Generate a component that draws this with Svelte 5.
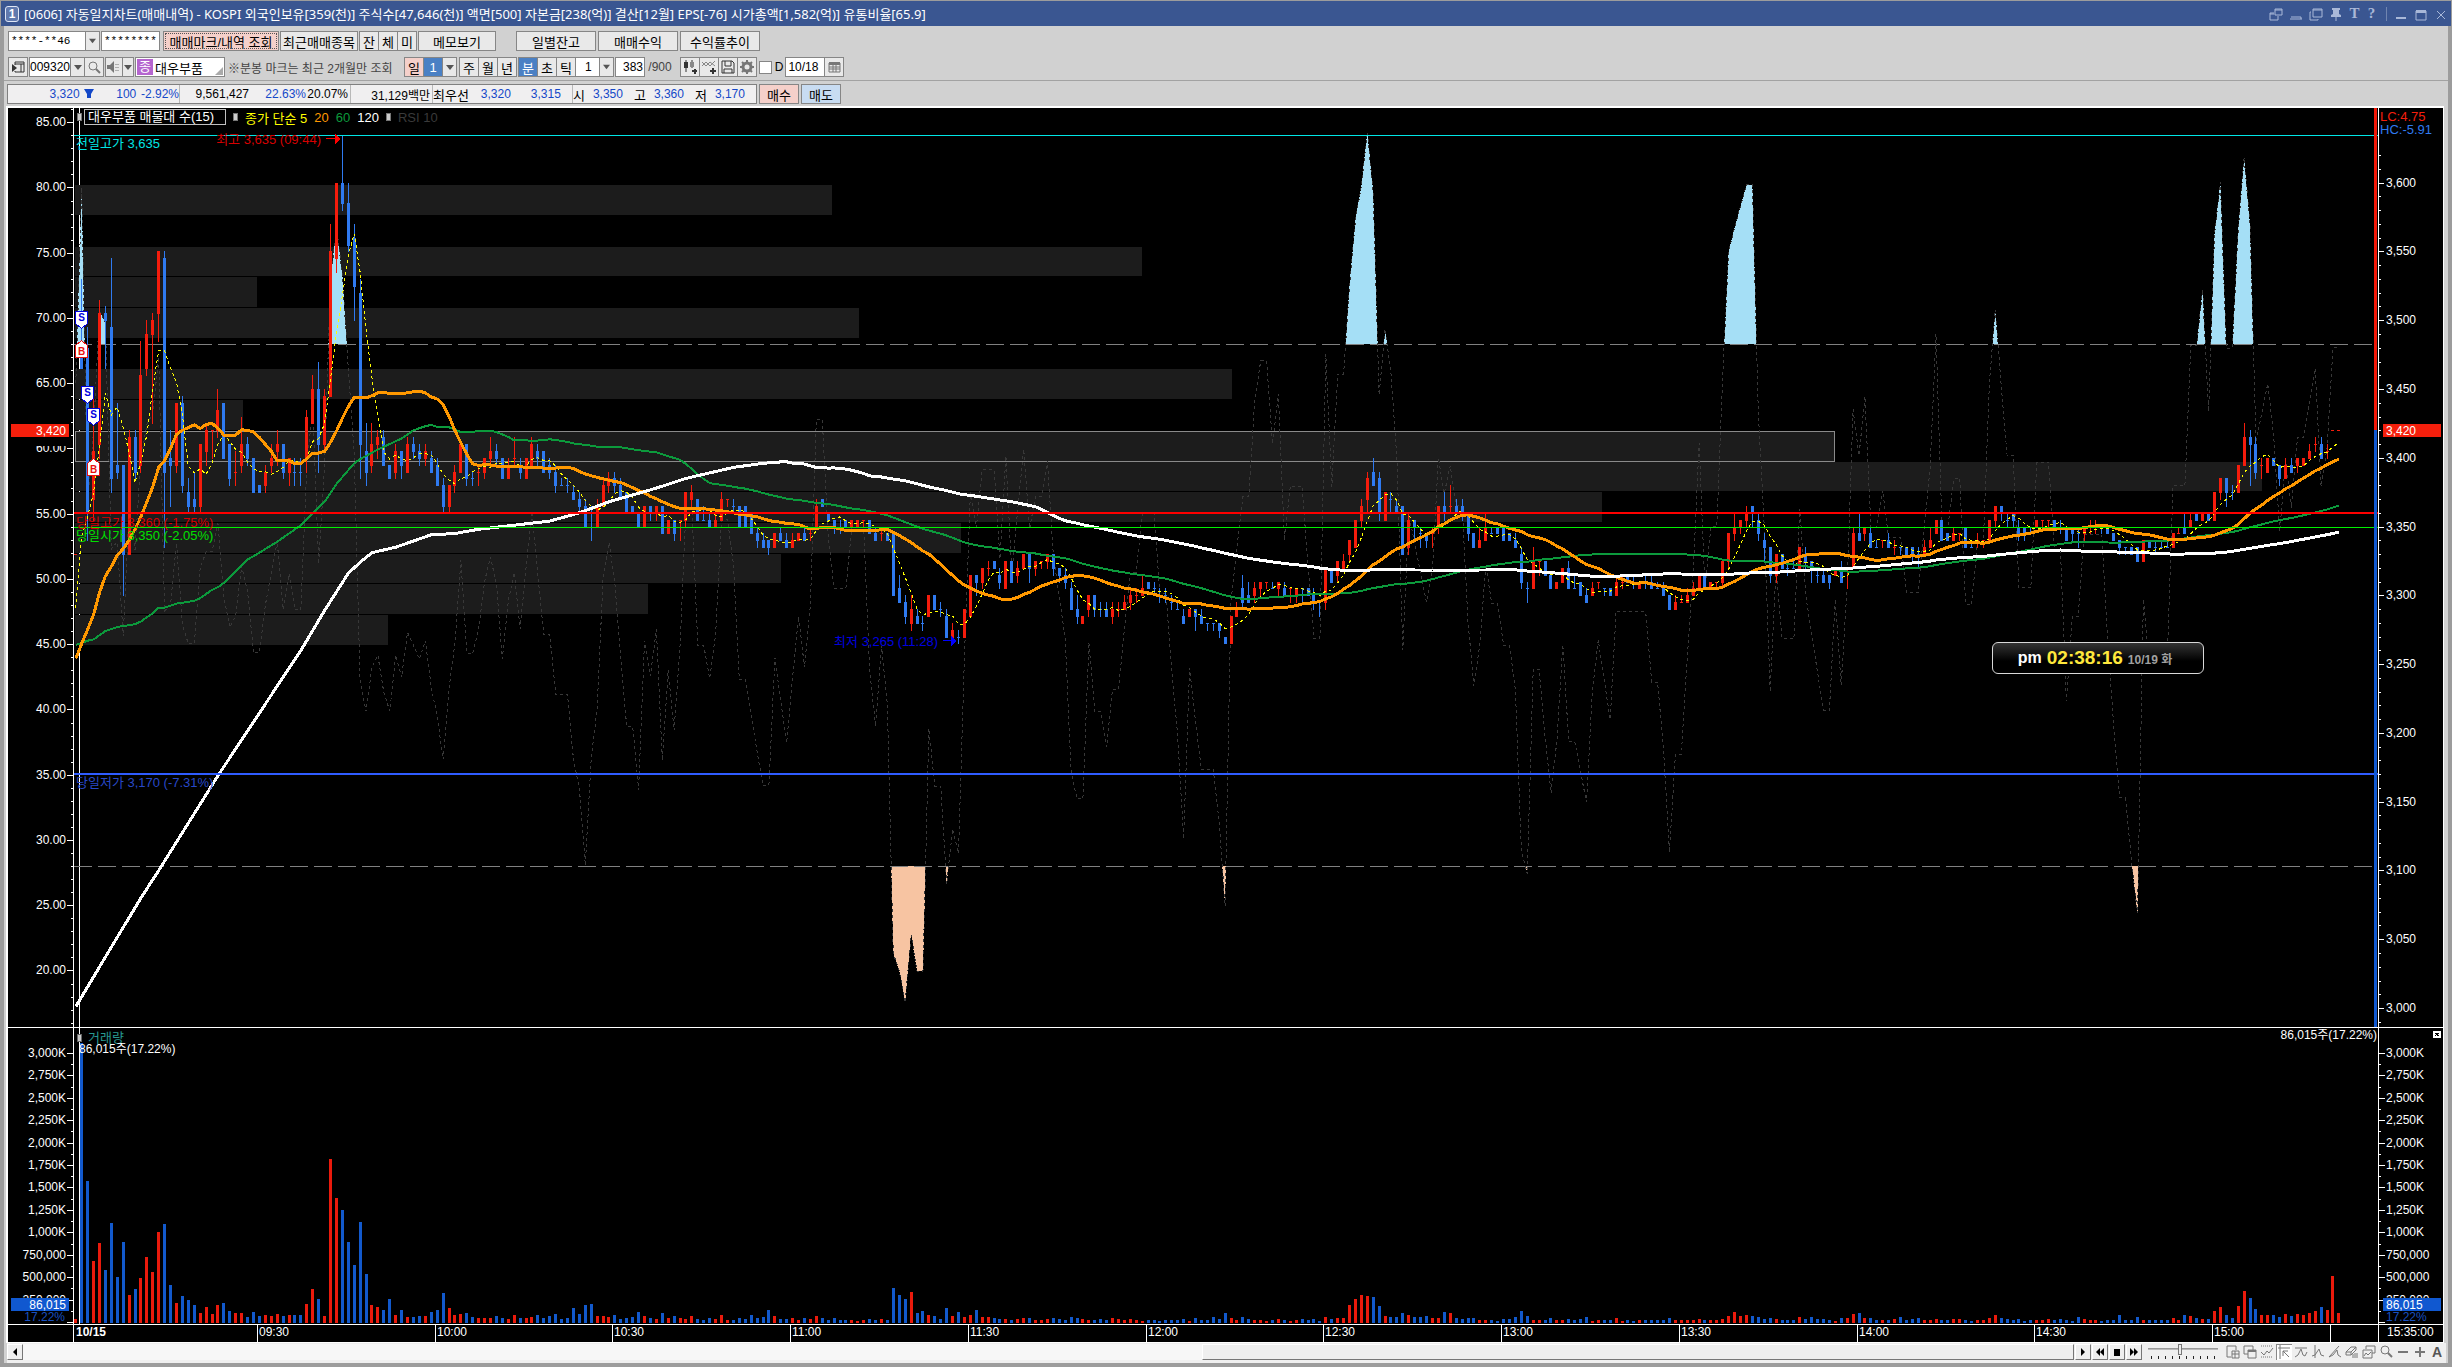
<script lang="ts">
	type Candle = { i: number; up: boolean; top: number; bottom: number; high: number; low: number; close: number; vol: number };
	type Point = [number, number];

	// one token per minute: r|b, body top, body bottom [, high, low], in 5 won ticks above 3,200
	const ticks = `r2626 b57536653 b56325928 r41344931 r61426340 b61606253 b59376935 b39384837 b39263920 r43264426
		b43384437 r52395738 r58536052 r60586145 r70617057 b69387027 b40394433 r48394838 b48364935 b35333732
		b34333832 r42334232 r44414539 r44444440 r47445043 b4840 b42374236 r38384136 r42394638 b42404339
		b4035 b3635 r38363935 r40394238 r42414439 b42384237 r40384036 b38384036 b38384036 r46404738
		r50455245 b50425438 r49425041 r70497449 r80698067 b80778776 b77718070 b72657460 b64426637 b41384536
		r42394538 r43424440 b43394439 b3937 r41384237 b41394137 r42384338 b42414340 b41404239 r41404239
		b40384138 b39364036 b36333732 r36333632 r38363935 r4238 b42374236 b37373836 r38383936 r40384037
		r41404339 b41404239 b4037 r39374037 r40404339 b39384037 r4037 r42394339 b41404239 b4138
		b39384037 b38363935 b36363736 b36363735 b35343634 b34333532 b33303430 b32323328 r33303430 r36333733
		r37363835 b37363835 b36343734 b3532 b3332 b3230 r3330 b33323331 r33323331 b3329
		r3129 b31293128 r31313128 r35313530 r35343633 b3431 b31313331 b31303230 r31303230 r34313531
		r34343433 b33333432 b3330 b3330 b3229 b29283027 b28272927 b28272826 r2927 b29283028
		b28272927 r28272927 r2928 b29283028 r29293028 r33303430 b3433 b3231 b31303129 b30303129
		b3130 r3130 r3130 r31313130 b3129 b29283028 r29293028 b2928 b2920 b21192319
		b19172016 r18162015 b17161816 b16161715 r2017 b2018 b18181917 b17141814 r15141614 b14141513
		r1814 r2317 b23222320 r24222421 r24242523 b2524 b23222421 r2521 b2522 r24232522
		r2624 b26242622 r25242523 r25252524 r26252624 b26242623 b24232422 b23222421 b21182218 b18172016
		r1716 r20182017 b20182017 b18181917 b18171917 r18171916 r18181917 r19182018 r20192118 r20202119
		r21202320 b2221 b21212220 b20202119 b20202119 b19192018 b18181918 b17161816 r1817 b18171815
		b17161816 b16161615 b16161615 b16151614 b1413 r1713 r18171917 b21192318 b20192219 r21202219
		r22212220 r22222221 b21212221 r22212220 b21202220 r21212119 r21202119 b21212119 b2120 b20192118
		b19191917 r24192418 b2422 r25232522 r25242624 r28262825 r3127 r33313430 r37343832 b38364036
		b37323831 r3531 b34343532 b33323432 b3326 r31273226 b31303128 b29293027 b29282927 r29293027
		r33303329 b33323531 r33333632 b33323432 b33323431 b32293228 b2927 r28273027 r30283228 b29293029
		b3029 b3028 b2928 b28272927 b26222721 b21212219 r25212721 r25252523 b2523 b2321
		r2221 r2422 b24212521 b21212321 b2220 b20192119 r21202220 r22222221 b21212120 b2120
		r22202320 r22222321 b2322 b22222321 r2221 b22222321 b22212321 b21212221 b21202220 b2018
		r19182018 r19192019 r20192119 r21202220 r2321 b2321 r2221 r22222221 r25222521 r29252924
		r30293228 r31303129 r32313330 b33323330 b31293228 b28272925 b27232722 r26232622 b2624 b24242523
		b24242524 r2724 b26252724 b25242522 b23232422 b23222422 b23222321 r2423 b24222522 r24242421
		r29243024 b29283228 r30293028 b29273027 b27272827 r28282827 b28272927 r27272826 b27272726 b2726
		b27262725 b26262724 r27262826 r28273027 r3129 b3128 b2928 r29283028 r29292928 b3027
		b27272827 r28282927 r28282827 r3128 r33313330 b33323331 b31313230 b32313230 b30293128 b30293028
		b29293029 r3130 r31313130 r31313130 b3130 b30303129 b3028 b30293028 b29293027 r30293028
		r30303129 r30303129 b30303029 b3029 b2928 b28272826 b27272726 b2726 b2725 r2825
		b2827 b27272826 b27272827 b27272827 r2927 r29293029 b30293229 r31303230 b3231 r3231
		b3231 r3531 r37353734 b37353733 b35353634 r3935 r43394539 b43424436 b42384337 r39394037
		r4038 b4039 b39373936 r39374037 b39384038 r40394038 r4039 r41404240 r42424341 b42404340
		r41414240 r4444 r4444`;

	// traded volume per minute, thousands of shares
	const volumes = `30 3110 1568 676 877 576 1100 498 888 297 364 487 721 554 1000 1089 409 208 286 242 186
		97 164 85 186 208 119 97 97 52 108 63 74 63 85 63 74 74 74 197 364 253 63 1813 1379 1245 888 632 1111 531 186
		164 130 253 74 130 52 52 63 63 108 130 320 152 74 85 97 52 41 41 41 63 41 30 74 41 41 52 74 41 63
		85 30 41 152 85 186 197 63 63 52 74 30 41 52 108 63 41 30 97 41 63 41 30 63 30 20 41 30 74 20
		20 41 30 74 41 52 130 63 30 30 41 20 41 30 63 41 20 41 20 20 20 8 20 30 20 30 20 375 297 253
		330 97 119 74 63 30 152 63 108 52 74 130 52 52 41 30 30 20 30 41 41 20 20 30 41 30 20 52 41 30 20
		20 30 20 41 30 20 30 20 8 20 20 8 20 20 20 30 8 41 20 20 52 30 97 41 20 52 30 20 20 10
		20 30 20 10 20 30 20 30 10 54 30 44 44 186 255 300 290 275 177 64 54 54 98 78 54 54 64 44 44 108
		98 44 30 44 44 20 20 20 10 30 30 54 123 64 20 20 20 44 20 20 30 20 30 54 10 20 20 20 44 10
		20 10 20 20 20 20 20 44 20 20 20 20 30 20 20 20 30 64 108 64 78 64 54 30 44 30 20 20 20 54
		30 54 30 30 20 10 44 44 88 98 44 44 20 20 20 30 52 20 30 41 20 20 30 20 20 30 30 20 10 20 20
		41 74 41 30 20 30 10 20 20 20 30 20 30 20 10 52 30 20 20 10 20 20 74 20 20 52 20 20 20 20 20
		41 20 74 63 41 30 30 119 164 74 41 175 342 264 141 74 74 74 52 85 63 85 74 97 119 164 130 509 97`
		.trim()
		.split(/\s+/)
		.map(Number);

	const candles: Candle[] = ticks
		.trim()
		.split(/\s+/)
		.map((token, n) => {
			const v = (token.slice(1).match(/\d\d/g) ?? []).map((t) => 3200 + Number(t) * 5);
			const up = token[0] === 'r';
			return {
				i: n - 1,
				up,
				top: v[0],
				bottom: v[1],
				high: v[2] ?? v[0],
				low: v[3] ?? v[1],
				close: up ? v[0] : v[1],
				vol: volumes[n] ?? 20
			};
		});

	// the averages start from the previous sessions, so their first points are given
	const head5: Point[] = [[-1, 3291], [0, 3343], [1, 3357], [2, 3375], [3, 3408]];
	const head20: Point[] = [
		[-1, 3254], [0, 3265], [1, 3275], [2, 3286], [3, 3302], [4, 3314], [5, 3321], [6, 3329], [7, 3334], [8, 3340],
		[9, 3348], [10, 3357], [11, 3368], [12, 3379], [13, 3393], [14, 3398], [15, 3407], [16, 3417], [17, 3420], [18, 3422]
	];
	const head60: Point[] = [
		[-1, 3264], [1, 3267], [2, 3268], [4, 3274], [6, 3277], [9, 3279], [10, 3281], [12, 3287], [13, 3291], [14, 3291],
		[16, 3294], [19, 3296], [20, 3298], [22, 3304], [23, 3306], [24, 3309], [28, 3326], [30, 3331], [33, 3339], [37, 3351],
		[39, 3360], [41, 3368], [43, 3381], [46, 3396], [47, 3399], [50, 3406], [52, 3410], [54, 3414], [56, 3420], [58, 3423]
	];
	const head120: Point[] = [
		[-1, 3001], [4, 3037], [10, 3080], [13, 3100], [23, 3169], [31, 3221], [33, 3234], [37, 3260], [41, 3289], [45, 3316],
		[47, 3324], [49, 3331], [53, 3335], [59, 3344], [63, 3345], [67, 3348], [73, 3351], [79, 3354], [84, 3360], [89, 3368],
		[97, 3378], [102, 3385], [110, 3393], [115, 3396], [118, 3397]
	];

	function average(period: number, head: Point[]): Point[] {
		const out = [...head];
		for (let n = period; n < candles.length; n++) {
			let sum = 0;
			for (let k = n - period + 1; k <= n; k++) sum += candles[k].close;
			out.push([candles[n].i, sum / period]);
		}
		return out;
	}

	function strength(period: number): Point[] {
		let gain = 9;
		let loss = 6;
		const out: Point[] = [[-1, 65]];
		for (let n = 1; n < candles.length; n++) {
			const diff = candles[n].close - candles[n - 1].close;
			gain = (gain * (period - 1) + Math.max(diff, 0)) / period;
			loss = (loss * (period - 1) + Math.max(-diff, 0)) / period;
			out.push([candles[n].i, (100 * gain) / (gain + loss)]);
		}
		return out;
	}

	const ma5 = average(5, head5);
	const ma20 = average(20, head20);
	const ma60 = average(60, head60);
	const ma120 = average(120, head120);
	const rsi = strength(10);

	// volume at price, 15 bins from the top, share of the plot width
	const profile = [0.329, 0, 0.464, 0.079, 0.341, 0, 0.503, 0.073, 0.765, 0.951, 0.664, 0.385, 0.307, 0.249, 0.136];

	const marks = [
		{ kind: 'S', i: 0, price: 3494 },
		{ kind: 'S', i: 1, price: 3440 },
		{ kind: 'S', i: 2, price: 3424 },
		{ kind: 'B', i: 0, price: 3485 },
		{ kind: 'B', i: 2, price: 3399 }
	];

	const times = ['09:30', '10:00', '10:30', '11:00', '11:30', '12:00', '12:30', '13:00', '13:30', '14:00', '14:30', '15:00'];

	const L = 66;
	const R = 65;
	const AXIS = 18;

	let W = $state(2436);
	let H = $state(1234);

	let right = $derived(W - R);
	let plotH = $derived(H - AXIS);
	let mainH = $derived(Math.round(plotH * 0.7557));
	let volH = $derived(plotH - mainH);
	let step = $derived((W - L - R) / 388.9);

	const xAt = (i: number) => L + (i + 1.3) * step;
	const col = (i: number) => Math.floor(xAt(i));
	const yPrice = (p: number) => ((3654.3 - p) / 668.1) * mainH;
	const row = (p: number) => Math.round(yPrice(p));
	const yRsi = (r: number) => ((86.09 - r) / 70.42) * mainH;
	const yVol = (v: number) => plotH - 2 - (v / 3000) * volH * 0.906;

	const line = (points: Point[], y: (v: number) => number) =>
		points.map(([i, v]) => `${xAt(i).toFixed(1)},${y(v).toFixed(1)}`).join(' ');

	const area = (level: number) =>
		`${xAt(-1)},${yRsi(level)} ${line(rsi, yRsi)} ${xAt(381)},${yRsi(level)}`;

	const comma = (n: number) => n.toLocaleString('en-US');
	const volLabel = (v: number) => (v >= 1000 ? comma(v) + 'K' : v + ',000');

	const range = (from: number, to: number, by: number) =>
		Array.from({ length: Math.floor((to - from) / by) + 1 }, (_, k) => from + k * by);

	let account = $state('****-**46');
	let password = $state('********');
	let code = $state('009320');
	let count = $state('383');
	let date = $state('10/18');
	let daily = $state(false);
	let zoom = $state(45);
</script>

{#snippet caret()}
	<svg class="caret" viewBox="0 0 8 5" aria-hidden="true"><path d="M0 0h8L4 5z" /></svg>
{/snippet}

<div class="window">
	<header class="title">
		<span class="badge">1</span>
		<h1>[0606] 자동일지차트(매매내역) - KOSPI 외국인보유[359(천)] 주식수[47,646(천)] 액면[500] 자본금[238(억)] 결산[12월] EPS[-76] 시가총액[1,582(억)] 유통비율[65.9]</h1>
		<div class="winbtns">
			<button aria-label="창 분리"><svg viewBox="0 0 14 14"><path d="M6 2h7v6H6zM6 3h7M5 6H1v7h8V9M1 7h4" /></svg></button>
			<button aria-label="내리기"><svg viewBox="0 0 14 14"><path d="M1 12h12M2 10h10v2" /></svg></button>
			<button aria-label="복사"><svg viewBox="0 0 14 14"><path d="M4 2h9v8H4zM4 3h9M2 5H1v8h8v-1" /></svg></button>
			<button aria-label="고정"><svg viewBox="0 0 14 14"><path class="solid" d="M3 1h8v2h-1v4l2 1v2H2V8l2-1V3H3z" /><path d="M7 10v4" /></svg></button>
			<button class="glyph">T</button>
			<button class="glyph">?</button>
			<span class="bar"></span>
			<button aria-label="최소화"><svg viewBox="0 0 14 14"><path class="solid" d="M2 10h10v2H2z" /></svg></button>
			<button aria-label="최대화"><svg viewBox="0 0 14 14"><path d="M2 4h10v9H2z" /><path class="solid" d="M2 3h10v3H2z" /></svg></button>
			<button aria-label="닫기"><svg viewBox="0 0 14 14"><path d="M3 4l8 8M11 4l-8 8" /></svg></button>
		</div>
	</header>

	<div class="body">
		<div class="tools">
			<div class="toolrow">
				<label class="combo account">
					<select bind:value={account} aria-label="계좌번호"><option>****-**46</option></select>
					{@render caret()}
				</label>
				<input class="pass" bind:value={password} aria-label="비밀번호" />
				<button class="pink focus w116">매매마크/내역 조회</button>
				<button class="w78">최근매매종목</button>
				<div class="group">
					<button class="sq">잔</button><button class="sq">체</button><button class="sq">미</button>
				</div>
				<button class="w78">메모보기</button>
				<div class="extra">
					<button class="w80">일별잔고</button>
					<button class="w80">매매수익</button>
					<button class="w80">수익률추이</button>
				</div>
			</div>

			<div class="toolrow second">
				<button class="sq" aria-label="종목창"><svg viewBox="0 0 16 16"><path d="M5 6V3h9v10H5v-1M5 5h9M11 5v8" /><path class="solid" d="M2 5l5 4-5 4z" /></svg></button>
				<div class="group">
					<input class="code" bind:value={code} aria-label="종목코드" />
					<button class="drop" aria-label="종목 목록">{@render caret()}</button>
					<button class="sq" aria-label="검색"><svg class="grey" viewBox="0 0 16 16"><circle cx="7" cy="7" r="4" /><path class="thick" d="M10 10l4 4" /></svg></button>
				</div>
				<div class="group">
					<button class="w18" aria-label="소리"><svg class="grey" viewBox="0 0 16 16"><path class="solid" d="M1 6h3l4-4v12l-4-4H1z" /><path d="M10 5v1M10 8v1M10 11v1M12 5v1M12 8v1M12 11v1" /></svg></button>
					<button class="narrow" aria-label="소리 설정">{@render caret()}</button>
				</div>
				<div class="stock"><b>종</b><span>대우부품</span><i></i></div>
				<p class="note">※분봉 마크는 최근 2개월만 조회</p>
				<div class="group day">
					<button class="sq pink">일</button>
					<button class="sq on">1</button>
					<button class="drop" aria-label="일 주기">{@render caret()}</button>
				</div>
				<div class="group">
					<button class="sq">주</button><button class="sq">월</button><button class="sq">년</button>
				</div>
				<div class="group">
					<button class="sq on">분</button><button class="sq">초</button><button class="sq">틱</button>
					<label class="combo unit">
						<select aria-label="분 주기"><option>1</option></select>
						{@render caret()}
					</label>
				</div>
				<label class="count"><input bind:value={count} /> /900</label>
				<div class="group icons">
					<button class="sq" aria-label="봉 추가"><svg viewBox="0 0 16 16"><path d="M4 1v12M10 1v8" /><path class="solid" d="M2 3h4v6H2z" /><path fill="#888" stroke="none" d="M8 3h4v5H8z" /><path class="thick" d="M13 10v5M10 12h5" /></svg></button>
					<button class="sq" aria-label="지표 추가"><svg viewBox="0 0 16 16"><path stroke="#888" d="M1 7l4-4 4 4 5-5M1 3l4 4 4-4 5 4" /><path class="thick" d="M12 9v6M9 12h6" /></svg></button>
					<button class="sq" aria-label="저장"><svg viewBox="0 0 16 16"><path d="M2 2h10l2 2v10H2zM5 2v5h6V2M4 14v-4h8v4" /></svg></button>
					<button class="sq" aria-label="설정"><svg class="grey" viewBox="0 0 16 16"><circle class="gear" cx="8" cy="8" r="4" /><path class="thick" d="M8 1v3M8 12v3M1 8h3M12 8h3M3 3l2 2M11 11l2 2M13 3l-2 2M5 11l-2 2" /></svg></button>
				</div>
				<label class="check"><input type="checkbox" bind:checked={daily} />D</label>
				<div class="group">
					<input class="date" bind:value={date} aria-label="일자" />
					<button class="sq" aria-label="달력"><svg class="grey" viewBox="0 0 16 16"><path d="M3 4h11v9H3zM3 8h11M3 10h11M7 5v8M10 5v8" /><path class="solid" d="M3 3h11v3H3z" /></svg></button>
				</div>
			</div>
		</div>

		<div class="quote">
			<div class="cells">
				<div class="cell c1"><span class="blue v72">3,320</span><svg class="fall" viewBox="0 0 10 10" aria-label="하락"><path d="M0 0h10L7 5v4H3V5z" /></svg><span class="blue v43">100</span><span class="blue v48">-2.92%</span></div>
				<div class="cell c2"><span class="v69">9,561,427</span><span class="blue v58">22.63%</span><span class="v42">20.07%</span></div>
				<div class="cell c3"><span class="v80">31,129백만</span></div>
				<div class="cell c4"><span class="ko">최우선</span><span class="blue v42">3,320</span><span class="blue v50">3,315</span></div>
				<div class="cell c5"><span class="ko">시</span><span class="blue v38">3,350</span><span class="ko gap">고</span><span class="blue v38">3,360</span><span class="ko gap">저</span><span class="blue v38">3,170</span></div>
			</div>
			<button class="pink w40">매수</button>
			<button class="sky w40">매도</button>
		</div>

		<div class="chart" bind:clientWidth={W} bind:clientHeight={H}>
			<svg class="plot" width={W} height={H}>
				<clipPath id="main"><rect x={L} y="0" width={W - L - R} height={mainH} /></clipPath>
				<clipPath id="over"><rect x={L} y="0" width={W} height={yRsi(68)} /></clipPath>
				<clipPath id="under"><rect x={L} y={yRsi(28)} width={W} height={mainH} /></clipPath>

				<rect class="white" x="71" y="0" width="1" height={plotH} />

				{#each profile as share, k}
					{@const y = row(3598 - k * 22.3)}
					{#if share}
						<rect
							class="bin"
							class:peak={k === 8}
							x={L + 1}
							{y}
							width={share * (W - L - R - 4)}
							height={row(3598 - (k + 1) * 22.3) - y - 1}
						/>
					{/if}
				{/each}

				<g clip-path="url(#main)">
					<polygon class="hot" points={area(68)} clip-path="url(#over)" />
					<polygon class="cold" points={area(28)} clip-path="url(#under)" />
					<line class="band" x1={L} x2={right - 4} y1={Math.round(yRsi(68)) + 0.5} y2={Math.round(yRsi(68)) + 0.5} />
					<line class="band" x1={L} x2={right - 4} y1={Math.round(yRsi(28)) + 0.5} y2={Math.round(yRsi(28)) + 0.5} />
					<polyline class="rsi" points={line(rsi, yRsi)} />

					{#each candles as c}
						<rect class:up={c.up} class:down={!c.up} x={col(c.i)} y={row(c.high)} width="1" height={row(c.low) - row(c.high) + 1} />
						<rect class:up={c.up} class:down={!c.up} x={col(c.i) - 1} y={row(c.top)} width="3" height={row(c.bottom) - row(c.top) + 1} />
					{/each}

					<polyline class="ma five" points={line(ma5, yPrice)} />
					<polyline class="ma sixty" points={line(ma60, yPrice)} />
					<polyline class="ma twenty" points={line(ma20, yPrice)} />
					<polyline class="ma long" points={line(ma120, yPrice)} />

					<rect fill="#00e6e6" x={L} y={row(3635)} width={W} height="1" />
					<rect fill="#ff0000" x={L} y={row(3360) - 1} width={W} height="2" />
					<rect fill="#00f000" x={L} y={row(3350)} width={W} height="1" />
					<rect fill="#2f5cff" x={L} y={row(3170) - 1} width={W} height="2" />
				</g>

				<g class="tag">
					<text fill="#00e6e6" x={L + 2} y={row(3635) + 13}>전일고가 3,635</text>
					<text fill="#d80000" x={L + 2} y={row(3360) + 14}>당일고가 3,360 (-1.75%)</text>
					<text fill="#00e000" x={L + 2} y={row(3350) + 13}>당일시가 3,350 (-2.05%)</text>
					<text fill="#2848c8" x={L + 2} y={row(3170) + 13}>당일저가 3,170 (-7.31%)</text>
					<text fill="#d80000" text-anchor="end" x={col(44) - 21} y={row(3635) + 9}>최고 3,635 (09:44)</text>
					<path fill="#ff0000" d={`M${col(44) - 16} ${row(3635) + 3}h9v-4l6 5-6 5v-5h-9z`} />
					<text fill="#0000e0" text-anchor="end" x={col(148) - 20} y={row(3265) + 3}>최저 3,265 (11:28)</text>
					<path fill="#0000ff" d={`M${col(148) - 15} ${row(3265) - 3}h8v-4l6 5-6 5v-5h-8z`} />
				</g>

				{#each marks as m}
					{@const x = col(m.i)}
					{@const y = row(m.price)}
					{#if m.kind === 'S'}
						<path class="mark sell" d={`M${x - 5.5} ${y - 16.5}h12v12l-6 5-6-5z`} />
						<text class="letter sell" x={x + 0.5} y={y - 7}>S</text>
					{:else}
						<path class="mark buy" d={`M${x - 5.5} ${y + 16.5}h12v-12l-6-5-6 5z`} />
						<text class="letter buy" x={x + 0.5} y={y + 14}>B</text>
					{/if}
				{/each}

				{#each candles as c}
					<rect class:vup={c.up} class:vdown={!c.up} x={col(c.i) - 1} y={Math.round(yVol(c.vol))} width="3" height={plotH - 1 - Math.round(yVol(c.vol))} />
				{/each}

				<!-- left and right scales -->
				<rect class="white" x={L - 1} y="0" width="1" height={H} />
				<rect class="white" x={right} y="0" width="1" height={H} />
				<rect fill="#f01808" x={right - 4} y="0" width="3" height={row(3420)} />
				<rect fill="#1058d0" x={right - 4} y={row(3420)} width="3" height={mainH - row(3420)} />

				{#each range(16, 86, 1) as r}
					{@const y = Math.round(yRsi(r))}
					<rect class="white" x={L - (r % 5 ? 3 : 7)} {y} width={r % 5 ? 2 : 6} height="1" />
					{#if r % 5 === 0}
						<text class="scale" text-anchor="end" x={L - 8} y={y + 4}>{r}.00</text>
					{/if}
				{/each}
				{#each range(2990, 3620, 10) as p}
					<rect class="white" x={right} y={row(p)} width={p % 50 ? 3 : 6} height="1" />
					{#if p % 50 === 0}
						<text class="scale" x={right + 8} y={row(p) + 4}>{comma(p)}</text>
					{/if}
				{/each}
				{#each range(0, 3000, 125) as v}
					{@const y = Math.round(yVol(v))}
					<rect class="white" x={L - (v % 250 ? 3 : 7)} {y} width={v % 250 ? 2 : 6} height="1" />
					<rect class="white" x={right} {y} width={v % 250 ? 3 : 7} height="1" />
					{#if v && v % 250 === 0}
						<text class="scale" text-anchor="end" x={L - 8} y={y + 4}>{volLabel(v)}</text>
						<text class="scale" x={right + 8} y={y + 4}>{volLabel(v)}</text>
					{/if}
				{/each}

				<rect fill="#000" x="3" y={row(3420) + 7} width="55" height="9" />
				<rect fill="#f51f0c" x="3" y={row(3420) - 6} width="58" height="13" />
				<text class="scale" text-anchor="end" x="58" y={row(3420) + 5}>3,420</text>
				<rect fill="#f51f0c" x={right + 5} y={row(3420) - 6} width="58" height="13" />
				<text class="scale" x={right + 8} y={row(3420) + 5}>3,420</text>
				<rect fill="#1058d0" x="3" y={plotH - 26} width="58" height="13" />
				<text class="scale" text-anchor="end" x="58" y={plotH - 15}>86,015</text>
				<text class="scale dim" text-anchor="end" x="57" y={plotH - 3}>17.22%</text>
				<rect fill="#1058d0" x={right + 5} y={plotH - 26} width="58" height="13" />
				<text class="scale" x={right + 8} y={plotH - 15}>86,015</text>
				<text class="scale dim" x={right + 8} y={plotH - 3}>17.22%</text>
				<text class="tag lc" x={right + 2} y="13">LC:4.75</text>
				<text class="tag hc" x={right + 2} y="26">HC:-5.91</text>

				<!-- volume panel captions -->
				<rect class="white" x="0" y={mainH} width={W} height="1" />
				<rect class="knob" x="69.5" y={mainH + 7.5} width="4" height="7" />
				<text class="ko" fill="#289890" x="80" y={mainH + 15}>거래량</text>
				<text class="scale" x="71" y={mainH + 26}>86,015주(17.22%)</text>
				<text class="scale" text-anchor="end" x={right - 1} y={mainH + 12}>86,015주(17.22%)</text>
				<rect class="white" x={W - 10} y={mainH + 4} width="8" height="7" />
				<path stroke="#000" d={`M${W - 8} ${mainH + 6}l4 3m0-3l-4 3`} />

				<!-- time axis -->
				<rect class="white" x="0" y={plotH} width={W} height="1" />
				<text class="scale bold" x={L + 2} y={H - 6}>10/15</text>
				{#each times as t, k}
					<rect class="white" x={col((k + 1) * 30) - 2} y={plotH} width="1" height={AXIS} />
					<text class="scale" x={col((k + 1) * 30)} y={H - 6}>{t}</text>
				{/each}
				<rect class="white" x={col(380) - 2} y={plotH} width="1" height={AXIS} />
				<text class="scale" x={right + 9} y={H - 6}>15:35:00</text>
			</svg>

			<div class="legend">
				<i></i>
				<span class="boxed">대우부품 매물대 수(15)</span>
				<i></i>
				<span class="yellow">종가 단순 5</span>
				<span class="orange">20</span>
				<span class="green">60</span>
				<span>120</span>
				<i></i>
				<span class="faint">RSI 10</span>
			</div>

			<div class="clock"><b>pm</b><strong>02:38:16</strong><small>10/19 화</small></div>
		</div>

		<footer>
			<button class="raised" aria-label="왼쪽"><svg viewBox="0 0 10 10"><path d="M7 1v8L3 5z" /></svg></button>
			<div class="track"><div class="thumb"></div></div>
			<div class="play">
				<button class="raised" aria-label="재생"><svg viewBox="0 0 10 10"><path d="M3 1v8l4-4z" /></svg></button>
				<button class="raised" aria-label="뒤로"><svg viewBox="0 0 10 10"><path d="M5 1v8L1 5zM9 1v8L5 5z" /></svg></button>
				<button class="raised" aria-label="정지"><svg viewBox="0 0 10 10"><path d="M2 2h6v7H2z" /></svg></button>
				<button class="raised" aria-label="앞으로"><svg viewBox="0 0 10 10"><path d="M1 1v8l4-4zM5 1v8l4-4z" /></svg></button>
			</div>
			<div class="slider">
				<input type="range" bind:value={zoom} aria-label="봉 간격" />
				<div class="dots"></div>
			</div>
			<div class="drawing">
				<button aria-label="창 추가"><svg viewBox="0 0 14 14"><path d="M5 12H1V1h9v4M6 6h7v7H6zM6 9h7M9 6v7" /></svg></button>
				<button aria-label="창 겹침"><svg viewBox="0 0 14 14"><path d="M5 9H1V1h9v4M5 5h8v8H5z" /><path class="solid" d="M5 5h8v2H5z" /></svg></button>
				<button aria-label="영역"><svg viewBox="0 0 14 14"><path stroke-dasharray="1 1" d="M1 1h12M1 12h12" /><path d="M1 7l3 3 3-4 2 2 4-5" /></svg></button>
				<button class="sel" aria-label="십자선"><svg viewBox="0 0 14 14"><path d="M1 3h12M3 0v14M6 6l6 6M6 6v5M6 6h5" /></svg></button>
				<button aria-label="수평선"><svg viewBox="0 0 14 14"><path d="M1 3h12M1 12l3-2 3-6 2 6 2 1 2-4" /></svg></button>
				<button aria-label="수직선"><svg viewBox="0 0 14 14"><path d="M4 0v13M1 11l3-1 4-6 2 6 3 1" /></svg></button>
				<button aria-label="추세선"><svg viewBox="0 0 14 14"><path d="M1 12L11 1M1 12l4-2 4-5 1 5 3 2" /></svg></button>
				<button aria-label="모두 지우기"><svg viewBox="0 0 14 14"><path d="M1 7l5-5h5v3l-5 5H1zM1 7h5v3M6 7l5-5M8 13V9M10 13V8M12 13V8" /></svg></button>
				<button aria-label="차트 겹침"><svg viewBox="0 0 14 14"><path d="M4 4V1h9v7h-3M1 5h9v8H1zM2 11l2-3 2 2 3-3" /></svg></button>
				<button aria-label="돋보기"><svg viewBox="0 0 14 14"><circle cx="6" cy="5" r="4" /><path class="thick" d="M9 8l4 4" /></svg></button>
				<button aria-label="축소"><svg viewBox="0 0 14 14"><path class="thick" d="M2 7h10" /></svg></button>
				<button aria-label="확대"><svg viewBox="0 0 14 14"><path class="thick" d="M2 7h10M7 2v10" /></svg></button>
				<button class="letterA">A</button>
			</div>
		</footer>
	</div>
</div>

<style>
	:global(body) {
		margin: 0;
		background: #9c9c9c;
	}

	.window {
		display: flex;
		flex-direction: column;
		height: 100vh;
		box-sizing: border-box;
		padding: 1px 1px 4px;
		background: #9c9c9c;
		font-family: 'Liberation Sans', 'Noto Sans CJK KR', sans-serif;
		font-size: 12px;
		color: #000;
	}

	button,
	input,
	select {
		box-sizing: border-box;
		height: 20px;
		margin: 0;
		padding: 0;
		border: 1px solid #868686;
		border-radius: 0;
		background: #e9e9e9;
		font: inherit;
		color: inherit;
	}

	button {
		display: flex;
		align-items: center;
		justify-content: center;
		font-size: 13px;
		white-space: nowrap;
	}

	input,
	select {
		background: #fff;
		padding: 0 2px;
	}

	svg {
		fill: none;
		stroke: currentColor;
	}

	.solid {
		fill: currentColor;
		stroke: none;
	}

	.thick {
		stroke-width: 2;
	}

	.gear {
		stroke-width: 3;
	}

	.title {
		display: flex;
		align-items: center;
		height: 25px;
		flex: none;
		padding: 0 2px 0 4px;
		background: #3a5691;
		color: #fff;
	}

	.badge {
		width: 12px;
		height: 14px;
		border: 1px solid #dfe6f5;
		border-radius: 3px;
		background: #6079ae;
		font-weight: bold;
		line-height: 14px;
		text-align: center;
	}

	h1 {
		margin: 0 0 0 5px;
		font-family: 'Noto Sans', 'Noto Sans CJK KR', sans-serif;
		font-size: 13px;
		font-weight: normal;
		line-height: 20px;
		white-space: nowrap;
	}

	.winbtns {
		display: flex;
		align-items: center;
		gap: 4px;
		margin-left: auto;
		color: #a9b8d8;
	}

	.winbtns button {
		width: 16px;
		border: 0;
		background: none;
	}

	.winbtns svg {
		width: 14px;
		height: 14px;
	}

	.winbtns .glyph {
		width: 13px;
		font: bold 15px 'Liberation Serif', serif;
	}

	.bar {
		width: 1px;
		height: 14px;
		margin: 0 2px 0 4px;
		background: #7085b0;
	}

	.body {
		display: flex;
		flex-direction: column;
		flex: 1;
		min-height: 0;
		margin: 0 3px;
		background: #d1d1d1;
	}

	.tools {
		padding: 5px 4px 3px;
		border-bottom: 1px solid #a2a2a2;
	}

	.toolrow {
		display: flex;
		align-items: center;
		gap: 1px;
		height: 20px;
	}

	.second {
		margin-top: 6px;
	}

	.group {
		display: flex;
	}

	.group > * + * {
		margin-left: -1px;
	}

	.combo {
		display: grid;
	}

	.combo select {
		grid-area: 1 / 1;
		appearance: none;
		width: 100%;
	}

	.combo .caret {
		grid-area: 1 / 1;
		justify-self: end;
		align-self: center;
		box-sizing: border-box;
		width: 14px;
		height: 18px;
		padding: 6px 3px;
		margin-right: 1px;
		border-left: 1px solid #868686;
		background: #e9e9e9;
		pointer-events: none;
	}

	.caret {
		width: 8px;
		height: 5px;
		fill: #555;
		stroke: none;
	}

	.account {
		width: 92px;
	}

	.account select,
	.pass {
		font-family: 'Liberation Mono', monospace;
		font-size: 11px;
	}

	.pass {
		width: 59px;
		margin-right: 2px;
	}

	.pink {
		background: #f5d0ca;
	}

	.sky {
		background: #c8dcf2;
	}

	.focus {
		outline: 1px dotted #555;
		outline-offset: -3px;
	}

	.w18 {
		width: 18px;
	}

	.w40 {
		width: 40px;
	}

	.w78 {
		width: 78px;
	}

	.w80 {
		width: 80px;
	}

	.w116 {
		width: 116px;
	}

	.sq {
		width: 20px;
	}

	.sq svg,
	.w18 svg {
		width: 16px;
		height: 16px;
		flex: none;
		color: #333;
	}

	.sq .grey,
	.w18 .grey {
		color: #777;
	}

	.extra {
		display: flex;
		gap: 2px;
		margin-left: 19px;
	}

	.code {
		width: 42px;
		padding: 0;
	}

	.drop {
		width: 15px;
	}

	.narrow {
		width: 12px;
	}

	.stock {
		display: flex;
		align-items: center;
		position: relative;
		box-sizing: border-box;
		width: 90px;
		height: 20px;
		border: 1px solid #868686;
		background: #fff;
		font-size: 13px;
	}

	.stock b {
		width: 16px;
		height: 16px;
		margin: 0 2px 0 1px;
		background: #b565cf;
		color: #fff;
		font-weight: normal;
		line-height: 16px;
		text-align: center;
	}

	.stock i {
		position: absolute;
		right: 1px;
		bottom: 1px;
		border: 4px solid #aaa;
		border-top-color: transparent;
		border-left-color: transparent;
	}

	.note {
		width: 170px;
		margin: 0 2px;
		color: #444;
		white-space: nowrap;
	}

	.day {
		margin: 0 1px 0 3px;
	}

	.on {
		background: #4a80c4;
		color: #fff;
	}

	.unit {
		width: 39px;
	}

	.unit select {
		padding-left: 9px;
	}

	.count {
		color: #444;
	}

	.count input {
		width: 30px;
		padding: 0 1px;
		color: #000;
		text-align: right;
	}

	.icons {
		margin-left: 7px;
	}

	.check {
		display: flex;
		align-items: center;
		gap: 3px;
		margin: 0 1px;
	}

	.check input {
		appearance: none;
		width: 13px;
		height: 13px;
	}

	.date {
		width: 40px;
	}

	.quote {
		display: flex;
		gap: 2px;
		height: 20px;
		padding: 3px 3px 2px;
	}

	.cells {
		display: flex;
		box-sizing: border-box;
		height: 20px;
		border: 1px solid #808080;
		background: #f0eff0;
	}

	.cell {
		display: flex;
		align-items: center;
		box-sizing: border-box;
		border-right: 1px solid #b8b8b8;
		text-align: right;
		white-space: nowrap;
	}

	.cell:last-child {
		border: 0;
	}

	.c1 {
		width: 172px;
	}

	.c2 {
		width: 171px;
	}

	.c3 {
		width: 82px;
	}

	.c4 {
		width: 140px;
	}

	.c5 {
		width: 183px;
	}

	.blue {
		color: #1448c8;
	}

	.ko {
		font-size: 13px;
	}

	.gap {
		margin-left: 11px;
	}

	.v38 {
		width: 38px;
	}

	.v42 {
		width: 42px;
	}

	.v43 {
		width: 43px;
	}

	.v48 {
		width: 48px;
	}

	.v50 {
		width: 50px;
	}

	.v58 {
		width: 57px;
	}

	.v69 {
		width: 69px;
	}

	.v72 {
		width: 72px;
	}

	.v80 {
		width: 79px;
	}

	.cell .v48 {
		margin-left: -5px;
	}

	.fall {
		width: 10px;
		height: 10px;
		flex: none;
		margin-left: 4px;
		fill: #1448c8;
		stroke: none;
	}

	.chart {
		position: relative;
		flex: 1;
		min-height: 0;
		margin: 0 4px 0 2px;
		border: solid #fff;
		border-width: 2px 1px 1px 2px;
		background: #000;
		overflow: hidden;
	}

	.plot {
		position: absolute;
		stroke: none;
		fill: #fff;
		shape-rendering: crispEdges;
	}

	.white {
		fill: #fff;
	}

	.bin {
		fill: #1c1c1c;
	}

	.peak {
		stroke: #8a8a8a;
	}

	.hot {
		fill: #a5dff6;
	}

	.cold {
		fill: #f7c4a2;
	}

	.band {
		stroke: #808080;
		stroke-dasharray: 18 6;
	}

	.rsi {
		fill: none;
		stroke: #383838;
		stroke-dasharray: 3 3;
	}

	.up {
		fill: #f51c0c;
	}

	.down {
		fill: #2f7af0;
	}

	.vup {
		fill: #ea1a0c;
	}

	.vdown {
		fill: #1259cc;
	}

	.ma {
		fill: none;
	}

	.five {
		stroke: #ffff00;
		stroke-dasharray: 3 3;
	}

	.twenty {
		stroke: #ff9800;
		stroke-width: 3;
	}

	.sixty {
		stroke: #0c9a3c;
		stroke-width: 2;
	}

	.long {
		stroke: #fff;
		stroke-width: 3;
	}

	.scale {
		font-size: 12px;
	}

	.tag {
		font-size: 13px;
	}

	.bold {
		font-weight: bold;
	}

	.dim {
		fill: #1850c0;
	}

	.lc {
		fill: #f51f0c;
	}

	.hc {
		fill: #2f7af0;
	}

	.mark {
		fill: #fff;
	}

	.mark.sell {
		stroke: #0000e0;
	}

	.mark.buy {
		stroke: #e81010;
	}

	.letter {
		font-size: 10px;
		font-weight: bold;
		text-anchor: middle;
	}

	.letter.sell {
		fill: #0000e0;
	}

	.letter.buy {
		fill: #e81010;
	}

	.knob {
		fill: #c8c8c8;
		stroke: #666;
	}

	.legend {
		display: flex;
		align-items: center;
		gap: 7px;
		position: absolute;
		top: 1px;
		left: 69px;
		height: 16px;
		font-size: 13px;
		color: #fff;
		white-space: nowrap;
	}

	.legend i {
		width: 3px;
		height: 6px;
		border: 1px solid #777;
		background: #ccc;
	}

	.legend i:first-child {
		margin-right: -5px;
	}

	.boxed {
		box-sizing: border-box;
		width: 142px;
		height: 16px;
		padding-left: 3px;
		border: 1px solid #c0c0c0;
		line-height: 14px;
	}

	.yellow {
		color: #ffff00;
	}

	.orange {
		color: #ff9800;
	}

	.green {
		color: #0c9a3c;
	}

	.faint {
		color: #3a3a3a;
	}

	.clock {
		display: flex;
		align-items: center;
		justify-content: center;
		gap: 5px;
		position: absolute;
		top: 534px;
		right: 239px;
		box-sizing: border-box;
		width: 212px;
		height: 32px;
		padding-right: 6px;
		border: 1px solid #d8d8d8;
		border-radius: 6px;
		background: linear-gradient(#333, #000 60%);
		color: #fff;
	}

	.clock b {
		font-size: 16px;
	}

	.clock strong {
		font-size: 19px;
		color: #ffe83c;
	}

	.clock small {
		font-size: 12px;
		font-weight: bold;
		color: #a0a0a0;
	}

	footer {
		display: flex;
		align-items: center;
		flex: none;
		height: 17px;
		margin: 0 2px 0 3px;
		padding-bottom: 3px;
		background: #efefef;
	}

	footer svg {
		width: 10px;
		height: 10px;
	}

	.raised {
		width: 16px;
		height: 16px;
		border: solid #fff;
		border-width: 1px;
		border-right-color: #777;
		border-bottom-color: #777;
		background: #efefef;
	}

	.raised svg {
		fill: #000;
		stroke: none;
	}

	.track {
		display: flex;
		justify-content: flex-end;
		flex: 1;
		height: 16px;
		background: #f7f7f7;
	}

	.thumb {
		box-sizing: border-box;
		width: 42.5%;
		border: 1px solid #fff;
		border-right-color: #777;
		border-bottom-color: #777;
		background: #efefef;
	}

	.play {
		display: flex;
		gap: 1px;
		margin: 0 6px 0 1px;
	}

	.slider {
		width: 70px;
		height: 16px;
	}

	.slider input {
		display: block;
		appearance: none;
		width: 100%;
		height: 11px;
		padding: 0;
		border: 0;
		background: linear-gradient(#888, #ccc) center / 100% 2px no-repeat;
	}

	.slider input::-webkit-slider-thumb {
		appearance: none;
		width: 4px;
		height: 11px;
		border: 1px solid #777;
		background: #eee;
	}

	.dots {
		height: 3px;
		margin: 1px 3px 0;
		background: repeating-linear-gradient(90deg, #222 0 1px, transparent 1px 7px);
	}

	.drawing {
		display: flex;
		gap: 1px;
		margin: 0 1px 0 7px;
		color: #777;
	}

	.drawing button {
		width: 16px;
		height: 16px;
		border: 0;
		background: none;
	}

	.drawing svg {
		width: 14px;
		height: 14px;
	}

	.drawing .sel {
		box-shadow: inset 1px 1px #888;
		background: #fff;
	}

	.drawing .letterA {
		color: #555;
		font-size: 14px;
		font-weight: bold;
	}
</style>
